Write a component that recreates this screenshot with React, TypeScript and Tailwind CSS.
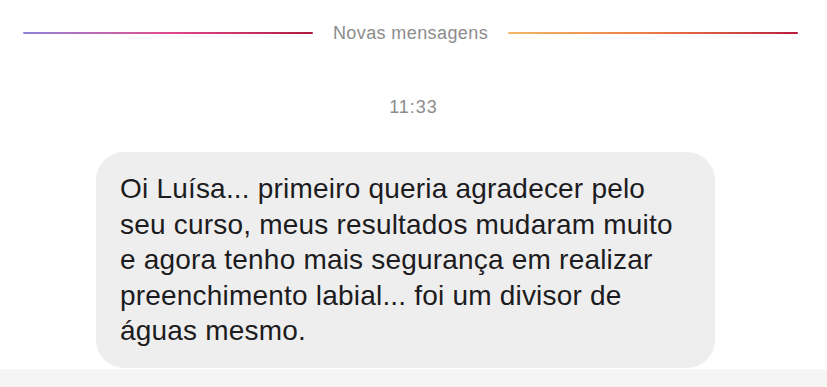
export default function App() {
  return (
    <div className="w-[827px] h-[387px] bg-white flex flex-col overflow-hidden font-['Liberation_Sans',Arial,sans-serif]">
      {/* new messages divider */}
      <div className="flex items-center gap-5 pl-[23px] pr-[29px] pt-[23px] h-[20px] box-content">
        <div className="flex-1 h-[2px] rounded-full bg-gradient-to-r from-[#8a80d8] via-[#e0488f] to-[#b0193f]" />
        <span className="text-[18px] text-[#8c8c8c] tracking-[0.4px]">Novas mensagens</span>
        <div className="flex-1 h-[2px] rounded-full bg-gradient-to-r from-[#f2b766] via-[#ec7a45] to-[#b8173c]" />
      </div>

      <div className="mt-[51px] text-center text-[18px] leading-[27px] text-[#8c8c8c] tracking-[1px]">11:33</div>

      <div className="flex-1 flex flex-col justify-end">
        <div className="ml-[96px] mb-[1px] w-[619px] rounded-[28px] bg-[#efeeef] pl-[24px] pr-4 pt-[19px] pb-[19.5px]">
          <p className="text-[28px] leading-[35.5px] tracking-[0.2px] text-[#1c1c1e]">
            Oi Luísa... primeiro queria agradecer pelo
            <br />
            seu curso, meus resultados mudaram muito
            <br />
            e agora tenho mais segurança em realizar
            <br />
            preenchimento labial... foi um divisor de
            <br />
            águas mesmo.
          </p>
        </div>
        <div className="h-[18px] bg-[#f4f5f4]" />
      </div>
    </div>
  );
}
